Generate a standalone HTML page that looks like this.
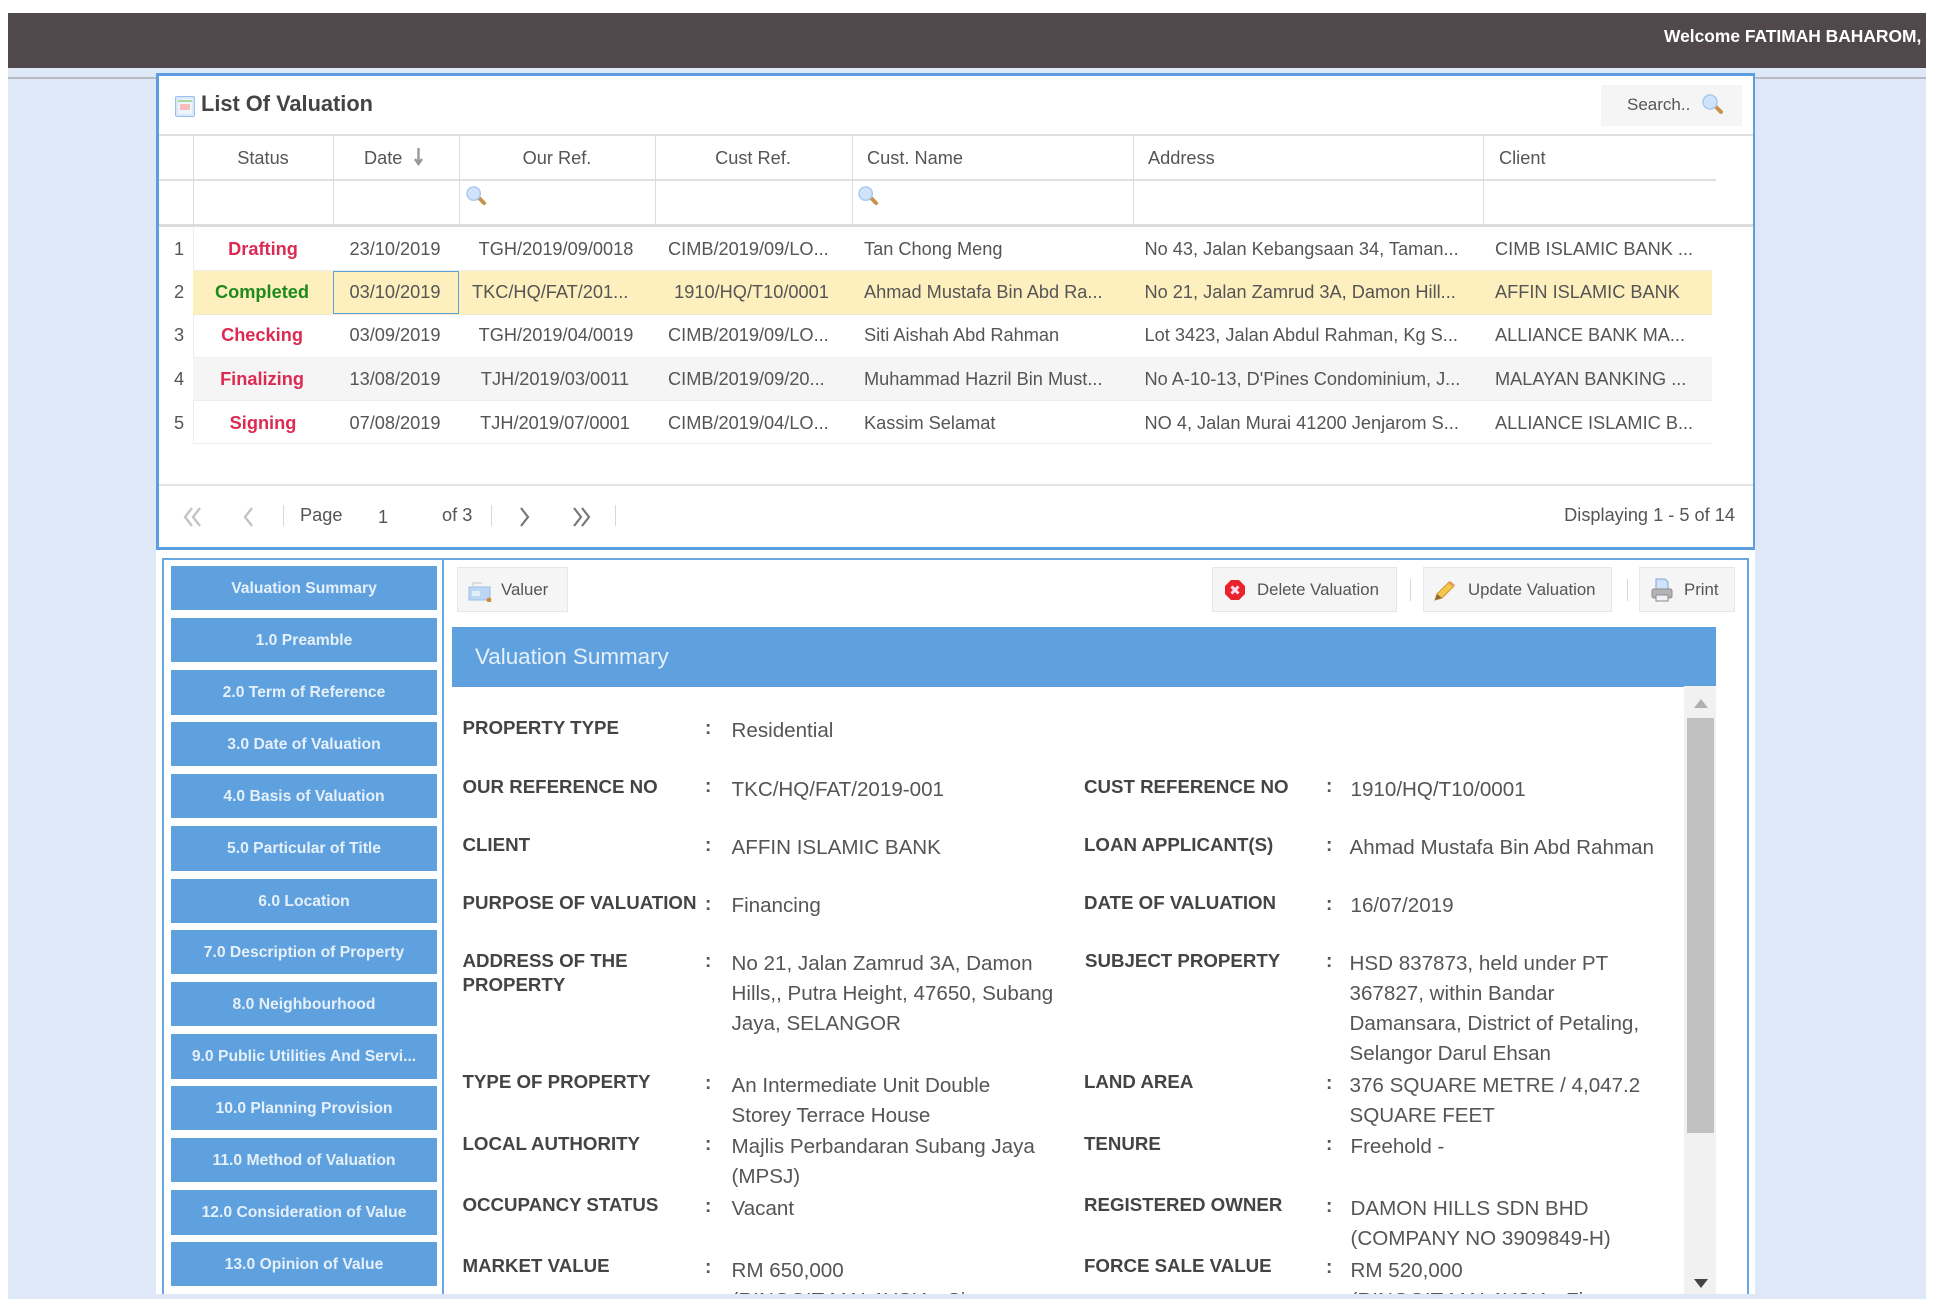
<!DOCTYPE html>
<html><head><meta charset="utf-8"><title>List Of Valuation</title>
<style>
html,body{margin:0;padding:0;width:1936px;height:1308px;overflow:hidden;background:#fff}
body{position:relative;font-family:"Liberation Sans",Arial,sans-serif;color:#555;font-size:18.2px;filter:blur(.35px)}
.b{position:absolute}
.t{position:absolute;white-space:nowrap;line-height:24px;height:24px}
.c{transform:translateX(-50%)}
.r{transform:translateX(-100%)}
.st{font-weight:bold;color:#dc2a52}
.g{font-weight:bold;color:#1c8a1c}
.nav{position:absolute;left:171px;width:266px;height:44.5px;background:#5fa1de;color:#e6f0fa;font-weight:bold;font-size:15.7px;line-height:46px;text-align:center;white-space:nowrap}
.btn{position:absolute;top:567px;height:44.5px;background:#f5f5f5;border:1px solid #e6e6e6;box-sizing:border-box}
.bt{position:absolute;top:578px;font-size:16.8px;line-height:24px;color:#555;white-space:nowrap}
.lab{position:absolute;font-weight:bold;font-size:18.7px;line-height:30px;color:#444;white-space:nowrap}
.val{position:absolute;font-size:20.6px;line-height:30px;color:#555;white-space:nowrap}
.col{position:absolute;font-weight:bold;font-size:19px;line-height:24px;color:#555}
.v{position:absolute;width:1px;background:#dcdcdc}
.sep{position:absolute;width:1px;background:#d8d8d8}
</style></head><body>

<div class="b" style="left:8px;top:68px;width:1918px;height:1231px;background:#dfe8f6"></div>
<div class="b" style="left:8px;top:13px;width:1918px;height:55px;background:#50484a"></div>
<div class="b" style="left:8px;top:77px;width:1918px;height:2px;background:#b8bcc2"></div>
<div class="t" style="left:1664px;top:24px;width:262px;overflow:hidden;font-weight:bold;color:#fff;font-size:17.4px">Welcome FATIMAH BAHAROM, </div>

<!-- white container -->
<div class="b" style="left:156px;top:73px;width:1599px;height:1221px;background:#fff"></div>

<!-- Panel 1 -->
<div class="b" style="left:156px;top:73px;width:1599px;height:477px;box-sizing:border-box;border:3px solid #5c9fe0;border-right-width:2px;background:#fff"></div>

<svg class="b" style="left:175px;top:96px" width="20" height="21" viewBox="0 0 20 21"><rect x=".5" y=".5" width="19" height="20" rx="1.5" fill="#dbe8fa" stroke="#9cc0ec"/><rect x="3" y="3" width="14" height="15" fill="#eef4fc"/><rect x="3" y="4" width="14" height="2" fill="#a8d8a0"/><rect x="5" y="8" width="10" height="6" fill="#f7bcbc"/></svg>
<div class="t" style="left:201px;top:92px;font-size:21.8px;font-weight:bold;color:#444">List Of Valuation</div>

<div class="b" style="left:1601px;top:85px;width:141px;height:41px;background:#f5f5f5"></div>
<div class="t" style="left:1627px;top:93px;font-size:17px;color:#555">Search..</div>
<svg class="b" style="left:1702px;top:93px" width="22" height="22" viewBox="0 0 22 22"><line x1="13" y1="13" x2="19" y2="19" stroke="#c8924a" stroke-width="4" stroke-linecap="round"/><circle cx="8" cy="9" r="7" fill="#cfe3fa" stroke="#a9c8ef" stroke-width="1.5"/></svg>

<!-- Table lines -->
<div class="b" style="left:159px;top:134px;width:1594px;height:2px;background:#e0e0e0"></div>
<div class="b" style="left:159px;top:179px;width:1557px;height:2px;background:#e0e0e0"></div>
<div class="b" style="left:159px;top:224px;width:1594px;height:3px;background:#dcdcdc"></div>
<div class="v" style="left:193px;top:135px;height:90px"></div>
<div class="v" style="left:333px;top:135px;height:90px"></div>
<div class="v" style="left:459px;top:135px;height:90px"></div>
<div class="v" style="left:655px;top:135px;height:90px"></div>
<div class="v" style="left:852px;top:135px;height:90px"></div>
<div class="v" style="left:1133px;top:135px;height:90px"></div>
<div class="v" style="left:1483px;top:135px;height:90px"></div>
<div class="v" style="left:193px;top:227px;height:217px;background:#eee"></div>

<!-- Header -->
<div class="t c" style="left:263px;top:146px">Status</div>
<div class="t" style="left:364px;top:146px">Date</div>
<svg class="b" style="left:413px;top:147px" width="11" height="19" viewBox="0 0 11 19"><path d="M5.5 1V15M2 12L5.5 17L9 12" fill="none" stroke="#999" stroke-width="2.4"/></svg>
<div class="t c" style="left:557px;top:146px">Our Ref.</div>
<div class="t c" style="left:753px;top:146px">Cust Ref.</div>
<div class="t" style="left:867px;top:146px">Cust. Name</div>
<div class="t" style="left:1148px;top:146px">Address</div>
<div class="t" style="left:1499px;top:146px">Client</div>

<svg class="b" style="left:466px;top:185px" width="21" height="21" viewBox="0 0 22 22"><line x1="13" y1="13" x2="19" y2="19" stroke="#c8924a" stroke-width="4" stroke-linecap="round"/><circle cx="8" cy="9" r="7" fill="#cfe3fa" stroke="#a9c8ef" stroke-width="1.5"/></svg>
<svg class="b" style="left:858px;top:185px" width="21" height="21" viewBox="0 0 22 22"><line x1="13" y1="13" x2="19" y2="19" stroke="#c8924a" stroke-width="4" stroke-linecap="round"/><circle cx="8" cy="9" r="7" fill="#cfe3fa" stroke="#a9c8ef" stroke-width="1.5"/></svg>

<!-- Rows -->
<div class="b" style="left:193px;top:270px;width:1519px;height:1px;background:#eee"></div>
<div class="b" style="left:193px;top:271px;width:1519px;height:44px;background:#feefbe;border-bottom:1px solid #f0e6c8;box-sizing:border-box"></div>
<div class="b" style="left:193px;top:357px;width:1519px;height:44px;background:#f5f5f5;border-top:1px solid #eee;border-bottom:1px solid #eee;box-sizing:border-box"></div>
<div class="b" style="left:193px;top:443px;width:1519px;height:1px;background:#eee"></div>
<div class="b" style="left:333px;top:271px;width:126px;height:43px;box-sizing:border-box;border:1.5px solid #5f9fd8"></div>

<div class="t c" style="left:179px;top:237px">1</div>
<div class="t c st" style="left:263px;top:237px">Drafting</div>
<div class="t c" style="left:395px;top:237px">23/10/2019</div>
<div class="t c" style="left:556px;top:237px">TGH/2019/09/0018</div>
<div class="t" style="left:668px;top:237px">CIMB/2019/09/LO...</div>
<div class="t" style="left:864px;top:237px">Tan Chong Meng</div>
<div class="t" style="left:1144.5px;top:237px">No 43, Jalan Kebangsaan 34, Taman...</div>
<div class="t" style="left:1495px;top:237px">CIMB ISLAMIC BANK ...</div>

<div class="t c" style="left:179px;top:280px">2</div>
<div class="t c g" style="left:262px;top:280px">Completed</div>
<div class="t c" style="left:395px;top:280px">03/10/2019</div>
<div class="t" style="left:472px;top:280px">TKC/HQ/FAT/201...</div>
<div class="t c" style="left:751.5px;top:280px">1910/HQ/T10/0001</div>
<div class="t" style="left:864px;top:280px">Ahmad Mustafa Bin Abd Ra...</div>
<div class="t" style="left:1144.5px;top:280px">No 21, Jalan Zamrud 3A, Damon Hill...</div>
<div class="t" style="left:1495px;top:280px">AFFIN ISLAMIC BANK</div>

<div class="t c" style="left:179px;top:323px">3</div>
<div class="t c st" style="left:262px;top:323px">Checking</div>
<div class="t c" style="left:395px;top:323px">03/09/2019</div>
<div class="t c" style="left:556px;top:323px">TGH/2019/04/0019</div>
<div class="t" style="left:668px;top:323px">CIMB/2019/09/LO...</div>
<div class="t" style="left:864px;top:323px">Siti Aishah Abd Rahman</div>
<div class="t" style="left:1144.5px;top:323px">Lot 3423, Jalan Abdul Rahman, Kg S...</div>
<div class="t" style="left:1495px;top:323px">ALLIANCE BANK MA...</div>

<div class="t c" style="left:179px;top:367px">4</div>
<div class="t c st" style="left:262px;top:367px">Finalizing</div>
<div class="t c" style="left:395px;top:367px">13/08/2019</div>
<div class="t c" style="left:555px;top:367px">TJH/2019/03/0011</div>
<div class="t" style="left:668px;top:367px">CIMB/2019/09/20...</div>
<div class="t" style="left:864px;top:367px">Muhammad Hazril Bin Must...</div>
<div class="t" style="left:1144.5px;top:367px">No A-10-13, D'Pines Condominium, J...</div>
<div class="t" style="left:1495px;top:367px">MALAYAN BANKING ...</div>

<div class="t c" style="left:179px;top:411px">5</div>
<div class="t c st" style="left:263px;top:411px">Signing</div>
<div class="t c" style="left:395px;top:411px">07/08/2019</div>
<div class="t c" style="left:555px;top:411px">TJH/2019/07/0001</div>
<div class="t" style="left:668px;top:411px">CIMB/2019/04/LO...</div>
<div class="t" style="left:864px;top:411px">Kassim Selamat</div>
<div class="t" style="left:1144.5px;top:411px">NO 4, Jalan Murai 41200 Jenjarom S...</div>
<div class="t" style="left:1495px;top:411px">ALLIANCE ISLAMIC B...</div>

<!-- Pager -->
<div class="b" style="left:159px;top:484px;width:1594px;height:2px;background:#e4e4e4"></div>
<svg class="b" style="left:183px;top:506px" width="20" height="22" viewBox="0 0 20 22"><path d="M9 2L2 11L9 20M17 2L10 11L17 20" fill="none" stroke="#c4c4c4" stroke-width="2.4"/></svg>
<svg class="b" style="left:242px;top:506px" width="12" height="22" viewBox="0 0 12 22"><path d="M10 2L3 11L10 20" fill="none" stroke="#c4c4c4" stroke-width="2.4"/></svg>
<div class="sep" style="left:283px;top:505px;height:21px"></div>
<div class="t" style="left:300px;top:503px">Page</div>
<div class="t" style="left:378px;top:505px">1</div>
<div class="t" style="left:442px;top:503px">of 3</div>
<div class="sep" style="left:491px;top:505px;height:21px"></div>
<svg class="b" style="left:519px;top:506px" width="12" height="22" viewBox="0 0 12 22"><path d="M2 2L9 11L2 20" fill="none" stroke="#777" stroke-width="2.2"/></svg>
<svg class="b" style="left:571px;top:506px" width="20" height="22" viewBox="0 0 20 22"><path d="M3 2L10 11L3 20M11 2L18 11L11 20" fill="none" stroke="#777" stroke-width="2.2"/></svg>
<div class="sep" style="left:615px;top:505px;height:21px"></div>
<div class="t r" style="left:1735px;top:503px">Displaying 1 - 5 of 14</div>

<!-- Panel 2 -->
<div class="b" style="left:162px;top:558px;width:1587px;height:736px;box-sizing:border-box;border:2px solid #6aa7e2;border-bottom:0"></div>
<div class="b" style="left:442px;top:558px;width:2px;height:736px;background:#6aa7e2"></div>

<div class="nav" style="top:565.5px">Valuation Summary</div>
<div class="nav" style="top:617.5px">1.0 Preamble</div>
<div class="nav" style="top:670px">2.0 Term of Reference</div>
<div class="nav" style="top:721.5px">3.0 Date of Valuation</div>
<div class="nav" style="top:773.5px">4.0 Basis of Valuation</div>
<div class="nav" style="top:826px">5.0 Particular of Title</div>
<div class="nav" style="top:878.5px">6.0 Location</div>
<div class="nav" style="top:929.5px">7.0 Description of Property</div>
<div class="nav" style="top:981.5px">8.0 Neighbourhood</div>
<div class="nav" style="top:1034px">9.0 Public Utilities And Servi...</div>
<div class="nav" style="top:1085.5px">10.0 Planning Provision</div>
<div class="nav" style="top:1137.5px">11.0 Method of Valuation</div>
<div class="nav" style="top:1190px">12.0 Consideration of Value</div>
<div class="nav" style="top:1241.5px">13.0 Opinion of Value</div>

<!-- Toolbar -->
<div class="btn" style="left:457px;width:111px"></div>
<svg class="b" style="left:468px;top:581px" width="24" height="21" viewBox="0 0 24 21"><path d="M5 5V2H14" fill="none" stroke="#c4c4c4"/><rect x="1" y="6" width="21" height="13" fill="#bcd6f4" stroke="#9dbfe8"/><rect x="4" y="10" width="8" height="5" fill="#e2eefb"/><circle cx="21" cy="19" r="2.4" fill="#cc8a3c"/></svg>
<div class="bt" style="left:501px">Valuer</div>

<div class="btn" style="left:1212px;width:185px"></div>
<svg class="b" style="left:1225px;top:580px" width="20" height="20" viewBox="0 0 20 20"><path d="M6 0H14L20 6V14L14 20H6L0 14V6Z" fill="#e8232b"/><path d="M6.5 6.5L13.5 13.5M13.5 6.5L6.5 13.5" stroke="#fde" stroke-width="3"/></svg>
<div class="bt" style="left:1257px">Delete Valuation</div>
<div class="sep" style="left:1410px;top:579px;height:22px"></div>

<div class="btn" style="left:1423px;width:189px"></div>
<svg class="b" style="left:1434px;top:580px" width="22" height="21" viewBox="0 0 22 21"><path d="M3 14L15 2L20 6L8 18L1 20Z" fill="#f2c94c" stroke="#d39a35"/><path d="M15 2L20 6" stroke="#e89a5a" stroke-width="3"/><path d="M1 20L3 14L8 18Z" fill="#8a6a3a"/></svg>
<div class="bt" style="left:1468px">Update Valuation</div>
<div class="sep" style="left:1627px;top:579px;height:22px"></div>

<div class="btn" style="left:1639px;width:96px"></div>
<svg class="b" style="left:1651px;top:578px" width="22" height="24" viewBox="0 0 22 24"><path d="M5 12V1H14L17 4V12Z" fill="#cfe2fb" stroke="#7fa8dc"/><rect x="1" y="11" width="20" height="9" rx="2" fill="#b4b4b4" stroke="#8a8a8a"/><rect x="5" y="17" width="12" height="6" fill="#eef2f8" stroke="#8a8a8a"/></svg>
<div class="bt" style="left:1684px">Print</div>

<!-- Band -->
<div class="b" style="left:452px;top:626.5px;width:1264px;height:60px;background:#5fa1de"></div>
<div class="t" style="left:475px;top:645px;font-size:22.4px;color:#e6f0fa">Valuation Summary</div>

<!-- Scrollbar -->
<div class="b" style="left:1684px;top:686px;width:32px;height:608px;background:#f1f1f1"></div>
<div class="b" style="left:1687px;top:718px;width:27px;height:415px;background:#c1c1c1"></div>
<svg class="b" style="left:1694px;top:699px" width="14" height="9"><path d="M0 9L7 0L14 9Z" fill="#b0b0b0"/></svg>
<svg class="b" style="left:1694px;top:1279px" width="14" height="9"><path d="M0 0L14 0L7 9Z" fill="#444"/></svg>

<!-- Form: clip to bottom -->
<div class="b" style="left:452px;top:687px;width:1232px;height:607px;overflow:hidden">
<div class="lab" style="left:10.5px;top:26px">PROPERTY TYPE</div><div class="col" style="left:253px;top:30px">:</div><div class="val" style="left:279.5px;top:29px">Residential</div>

<div class="lab" style="left:10.5px;top:85px">OUR REFERENCE NO</div><div class="col" style="left:253px;top:88px">:</div><div class="val" style="left:279.5px;top:88px">TKC/HQ/FAT/2019-001</div>
<div class="lab" style="left:632px;top:85px">CUST REFERENCE NO</div><div class="col" style="left:874px;top:88px">:</div><div class="val" style="left:898.5px;top:88px">1910/HQ/T10/0001</div>

<div class="lab" style="left:10.5px;top:143px">CLIENT</div><div class="col" style="left:253px;top:147px">:</div><div class="val" style="left:279.5px;top:146px">AFFIN ISLAMIC BANK</div>
<div class="lab" style="left:632px;top:143px">LOAN APPLICANT(S)</div><div class="col" style="left:874px;top:147px">:</div><div class="val" style="left:897.5px;top:146px">Ahmad Mustafa Bin Abd Rahman</div>

<div class="lab" style="left:10.5px;top:200.5px">PURPOSE OF VALUATION</div><div class="col" style="left:253px;top:205.5px">:</div><div class="val" style="left:279.5px;top:204px">Financing</div>
<div class="lab" style="left:632px;top:200.5px">DATE OF VALUATION</div><div class="col" style="left:874px;top:205.5px">:</div><div class="val" style="left:898.5px;top:204px">16/07/2019</div>

<div class="lab" style="left:10.5px;top:262px;line-height:24px">ADDRESS OF THE<br>PROPERTY</div><div class="col" style="left:253px;top:263px">:</div><div class="val" style="left:279.5px;top:262px">No 21, Jalan Zamrud 3A, Damon<br>Hills,, Putra Height, 47650, Subang<br>Jaya, SELANGOR</div>
<div class="lab" style="left:633px;top:259px">SUBJECT PROPERTY</div><div class="col" style="left:874px;top:263px">:</div><div class="val" style="left:897.5px;top:262px">HSD 837873, held under PT<br>367827, within Bandar<br>Damansara, District of Petaling,<br>Selangor Darul Ehsan</div>

<div class="lab" style="left:10.5px;top:380px">TYPE OF PROPERTY</div><div class="col" style="left:253px;top:385px">:</div><div class="val" style="left:279.5px;top:384px">An Intermediate Unit Double<br>Storey Terrace House</div>
<div class="lab" style="left:632px;top:380px">LAND AREA</div><div class="col" style="left:874px;top:385px">:</div><div class="val" style="left:897.5px;top:384px">376 SQUARE METRE / 4,047.2<br>SQUARE FEET</div>

<div class="lab" style="left:10.5px;top:442px">LOCAL AUTHORITY</div><div class="col" style="left:253px;top:446px">:</div><div class="val" style="left:279.5px;top:445px">Majlis Perbandaran Subang Jaya<br>(MPSJ)</div>
<div class="lab" style="left:632px;top:442px">TENURE</div><div class="col" style="left:874px;top:446px">:</div><div class="val" style="left:898.5px;top:445px">Freehold -</div>

<div class="lab" style="left:10.5px;top:503px">OCCUPANCY STATUS</div><div class="col" style="left:253px;top:508px">:</div><div class="val" style="left:279.5px;top:507px">Vacant</div>
<div class="lab" style="left:632px;top:503px">REGISTERED OWNER</div><div class="col" style="left:874px;top:508px">:</div><div class="val" style="left:898.5px;top:507px">DAMON HILLS SDN BHD<br>(COMPANY NO 3909849-H)</div>

<div class="lab" style="left:10.5px;top:564px">MARKET VALUE</div><div class="col" style="left:253px;top:569px">:</div><div class="val" style="left:279.5px;top:569px">RM 650,000<br>(RINGGIT MALAYSIA : Si</div>
<div class="lab" style="left:632px;top:564px">FORCE SALE VALUE</div><div class="col" style="left:874px;top:569px">:</div><div class="val" style="left:898.5px;top:569px">RM 520,000<br>(RINGGIT MALAYSIA : Fi</div>
</div>

</body></html>
